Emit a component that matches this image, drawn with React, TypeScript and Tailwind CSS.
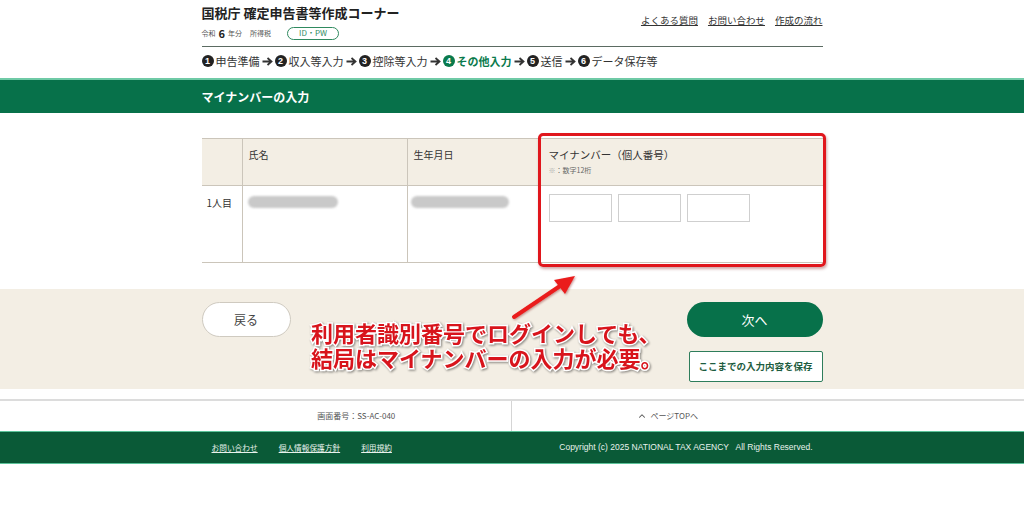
import { ChevronUp } from "lucide-react";

const steps = [
  { n: "1", label: "申告準備" },
  { n: "2", label: "収入等入力" },
  { n: "3", label: "控除等入力" },
  { n: "4", label: "その他入力", current: true },
  { n: "5", label: "送信" },
  { n: "6", label: "データ保存等" },
];

function StepArrow() {
  return (
    <svg width="11" height="9" viewBox="0 0 11 9" className="shrink-0">
      <path d="M0.5 4.5H9M5.5 1L9.5 4.5L5.5 8" fill="none" stroke="#333" strokeWidth="1.8" />
    </svg>
  );
}

export default function App() {
  return (
    <div className="relative w-[1024px] min-h-[515px] bg-white text-[#333] font-['Noto_Sans_CJK_JP','Noto_Sans',sans-serif]">
      {/* header */}
      <div className="w-[621px] mx-auto pt-[4px]">
        <div className="flex justify-between items-start">
          <div>
            <h1 className="text-[13px] font-bold leading-[17px] text-[#222]">国税庁 確定申告書等作成コーナー</h1>
            <div className="flex items-center h-[14px] mt-[5px] text-[7px] text-[#555]">
              <span>令和</span>
              <span className="text-[11px] font-bold mx-[3px] text-[#222]">6</span>
              <span>年分</span>
              <span className="ml-[8px]">所得税</span>
              <span className="ml-[16px] w-[52px] h-[13px] rounded-full border border-[#2f8a5f] text-[#2f8a5f] text-[8px] flex items-center justify-center leading-none">
                ID・PW
              </span>
            </div>
          </div>
          <nav className="flex gap-[10px] mt-[10px] text-[9.5px] leading-[12px] text-[#333]">
            <a className="underline">よくある質問</a>
            <a className="underline">お問い合わせ</a>
            <a className="underline">作成の流れ</a>
          </nav>
        </div>
        <div className="mt-[6px] border-b border-[#5b6b62]" />
        <div className="flex items-center h-[14px] mt-[7px] text-[11px] leading-none">
          {steps.map((s, i) => (
            <div key={s.n} className="flex items-center">
              <span
                className={`w-[12px] h-[12px] rounded-full text-white text-[9px] font-bold flex items-center justify-center font-['Liberation_Sans',sans-serif] ${
                  s.current ? "bg-[#0a7a4c]" : "bg-[#222]"
                }`}
              >
                {s.n}
              </span>
              <span className={`ml-[2px] ${s.current ? "font-bold text-[#0a7a4c]" : "text-[#333]"}`}>{s.label}</span>
              {i < steps.length - 1 && (
                <span className="mx-[2px] flex">
                  <StepArrow />
                </span>
              )}
            </div>
          ))}
        </div>
      </div>

      {/* section title */}
      <div className="mt-[10px] border-t-2 border-[#6fcaa6] bg-[#07714a] h-[35px]">
        <div className="w-[621px] mx-auto h-full flex items-center">
          <h2 className="text-white font-bold text-[12px]">マイナンバーの入力</h2>
        </div>
      </div>

      {/* table */}
      <div className="relative w-[621px] mx-auto mt-[25px]">
        <div className="grid grid-cols-[41px_165px_131px_284px] border-y border-[#cbc5ba] text-[10px]">
          <div className="h-[46px] bg-[#f3eee4] border-r border-[#cbc5ba]" />
          <div className="h-[46px] bg-[#f3eee4] border-r border-[#cbc5ba] pl-[6px] pt-[8px]">氏名</div>
          <div className="h-[46px] bg-[#f3eee4] border-r border-[#cbc5ba] pl-[6px] pt-[8px]">生年月日</div>
          <div className="h-[46px] bg-[#f3eee4] pl-[10px] pt-[8px]">
            <div className="text-[10.5px]">マイナンバー（個人番号）</div>
            <div className="text-[7px] text-[#666] mt-[2px]">
              <span className="text-[#aaa]">※</span>：数字12桁
            </div>
          </div>

          <div className="h-[77px] border-t border-r border-[#cbc5ba] pl-[5px] pt-[9px]">1人目</div>
          <div className="h-[77px] border-t border-r border-[#cbc5ba] pl-[5px] pt-[10px]">
            <div className="w-[90px] h-[12px] rounded-full bg-[#c9c9c9] blur-[1px]" />
          </div>
          <div className="h-[77px] border-t border-r border-[#cbc5ba] pl-[3px] pt-[10px]">
            <div className="w-[98px] h-[12px] rounded-full bg-[#c9c9c9] blur-[1px]" />
          </div>
          <div className="h-[77px] border-t border-[#cbc5ba] pl-[10px] pt-[8px] flex gap-[6px] items-start">
            <input className="w-[63px] h-[28px] border border-[#cfcfcf] bg-white" />
            <input className="w-[63px] h-[28px] border border-[#cfcfcf] bg-white" />
            <input className="w-[63px] h-[28px] border border-[#cfcfcf] bg-white" />
          </div>
        </div>
        <div className="absolute left-[336px] top-[-5px] w-[288px] h-[134px] border-[3px] border-[#e0161c] rounded-[5px] shadow-[1px_2px_3px_rgba(120,0,0,0.35)]" />
      </div>

      {/* actions */}
      <div className="mt-[26px] h-[100px] bg-[#f3eee4]">
        <div className="w-[621px] mx-auto pt-[13px] flex justify-between">
          <button className="w-[89px] h-[35px] rounded-full bg-white border border-[#cfcac0] text-[12px] text-[#444]">戻る</button>
          <div className="flex flex-col items-end gap-[14px]">
            <button className="w-[136px] h-[35px] rounded-full bg-[#07714a] text-white text-[13px]">次へ</button>
            <button className="w-[134px] h-[31px] rounded-[2px] bg-white border border-[#2e7d5b] text-[#1d5c40] font-bold text-[9.5px]">
              ここまでの入力内容を保存
            </button>
          </div>
        </div>
      </div>

      {/* page footer */}
      <div className="mt-[10px] border-t-2 border-[#dcdcdc]">
        <div className="w-[621px] mx-auto grid grid-cols-2 h-[30px] text-[8px] text-[#555]">
          <div className="flex items-center justify-center border-r border-[#d5d5d5]">画面番号：SS-AC-040</div>
          <div className="flex items-center justify-center gap-[4px]">
            <ChevronUp size={10} strokeWidth={2.5} />
            <span>ページTOPへ</span>
          </div>
        </div>
      </div>
      <div className="border-y border-[#5cc39a] bg-[#0a5a37] h-[33px]">
        <div className="w-[621px] mx-auto h-full flex items-center justify-between text-[7.7px] text-[#e8f2ec]">
          <div className="flex gap-[21px] pl-[10px]">
            <a className="underline">お問い合わせ</a>
            <a className="underline">個人情報保護方針</a>
            <a className="underline">利用規約</a>
          </div>
          <div className="pr-[10px] text-[8.5px] font-['Liberation_Sans',sans-serif] whitespace-pre">
            Copyright (c) 2025 NATIONAL TAX AGENCY   All Rights Reserved.
          </div>
        </div>
      </div>

      {/* annotation overlay */}
      <svg className="absolute left-[505px] top-[268px]" width="80" height="56" viewBox="0 0 80 56">
        <defs>
          <filter id="sh" x="-20%" y="-20%" width="140%" height="140%">
            <feDropShadow dx="1" dy="1" stdDeviation="1" floodColor="#700" floodOpacity="0.4" />
          </filter>
        </defs>
        <g filter="url(#sh)">
          <path d="M9 49L58 16" stroke="#ea1c1c" strokeWidth="4" strokeLinecap="round" />
          <path d="M70 8L49 12L60 26Z" fill="#ea1c1c" />
        </g>
      </svg>
      <div className="absolute left-[311px] top-[320px] text-[22px] leading-[25px] font-bold text-[#d8141c] [-webkit-text-stroke:3px_white] [paint-order:stroke_fill] [filter:drop-shadow(1px_1px_1px_rgba(0,0,0,0.45))] whitespace-nowrap">
        <div className="h-[25px]">利用者識別番号でログインしても、</div>
        <div className="h-[25px]">結局はマイナンバーの入力が必要。</div>
      </div>
    </div>
  );
}
